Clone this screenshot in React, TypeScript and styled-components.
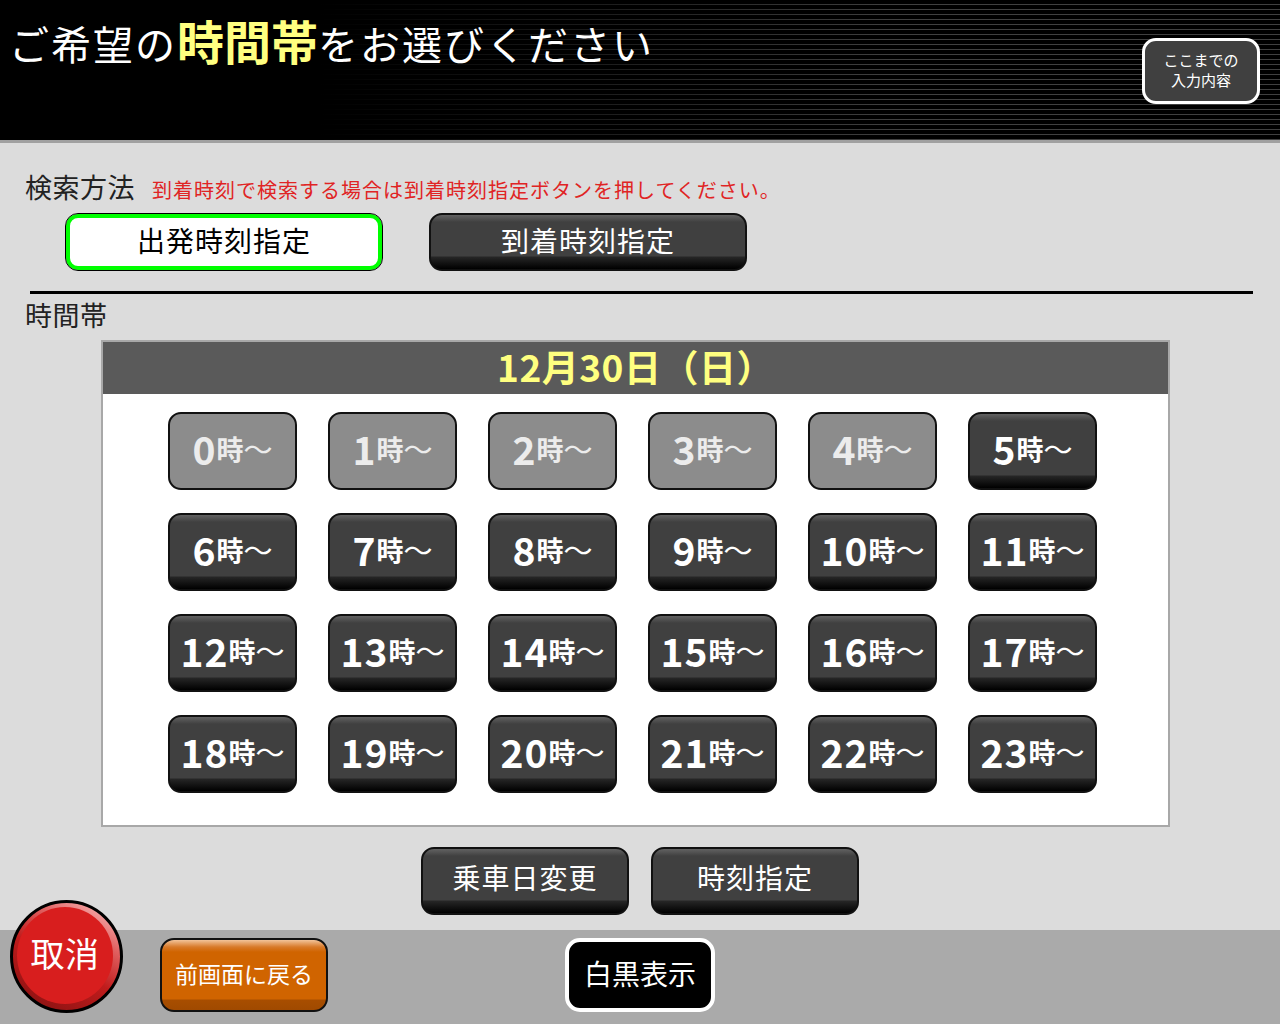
import React from "react";
import styled, { createGlobalStyle, css } from "styled-components";

const Global = createGlobalStyle`
  html, body { margin: 0; padding: 0; }
  body {
    background: #dcdcdc;
    font-family: "Noto Sans CJK JP", "Noto Sans", sans-serif;
  }
  * { box-sizing: border-box; }
`;

const Page = styled.div`
  width: 1280px;
  height: 1024px;
  display: flex;
  flex-direction: column;
  overflow: hidden;
`;

const Header = styled.header`
  height: 143px;
  flex: none;
  display: flex;
  justify-content: space-between;
  align-items: flex-start;
  border-bottom: 3px solid #a0a0a0;
  background:
    linear-gradient(to right, #000 0%, #000 25%, rgba(0,0,0,0.5) 50%, rgba(0,0,0,0) 70%),
    repeating-linear-gradient(to bottom, #000 0px, #000 4px, #404040 4px, #404040 5px);
`;

const Title = styled.h1`
  margin: 0;
  padding: 13px 0 0 9px;
  font-size: 40px;
  line-height: 54px;
  font-weight: 400;
  color: #fff;
  letter-spacing: 2px;
  white-space: nowrap;
`;

const TitleStrong = styled.span`
  font-size: 47px;
  font-weight: 700;
  color: #ffff80;
  letter-spacing: 0;
`;

const SummaryButton = styled.button`
  margin: 38px 20px 0 0;
  width: 118px;
  height: 66px;
  border: 3px solid #fff;
  border-radius: 14px;
  background: #404040;
  color: #fff;
  font-family: inherit;
  padding: 0 0 2px;
  display: flex;
  flex-direction: column;
  align-items: center;
  justify-content: center;
`;

const SummaryLine = styled.span`
  display: block;
  font-size: 15px;
  line-height: 20px;
  height: 20px;
`;

const Main = styled.main`
  flex: 1;
  display: flex;
  flex-direction: column;
  padding: 0 0 0 25px;
`;

const SearchRow = styled.div`
  margin-top: 29px;
  display: flex;
  align-items: baseline;
  gap: 17px;
  height: 30px;
`;

const Label = styled.div`
  font-size: 27px;
  line-height: 30px;
  color: #222;
  letter-spacing: 0.5px;
`;

const Hint = styled.span`
  font-size: 20px;
  line-height: 30px;
  color: #e02424;
  letter-spacing: 1px;
`;

const ModeRow = styled.div`
  margin: 11px 0 0 40px;
  display: flex;
  gap: 46px;
`;

const darkGloss = css`
  background:
    linear-gradient(to bottom,
      #626262 0px, #4a4a4a 5px, #404040 7px,
      #404040 calc(100% - 13px), #262626 calc(100% - 12px), #000 100%);
  color: #fff;
`;

const ModeButton = styled.button<{ $active?: boolean }>`
  width: 318px;
  height: 58px;
  border-radius: 13px;
  font-family: inherit;
  font-size: 28px;
  letter-spacing: 1px;
  padding: 0 0 5px;
  display: flex;
  align-items: center;
  justify-content: center;
  ${(p) =>
    p.$active
      ? css`
          background: #fff;
          color: #000;
          border: 1px solid #000;
          box-shadow: inset 0 0 0 4px #00ff00;
        `
      : css`
          ${darkGloss};
          border: 2px solid #111;
        `}
`;

const Divider = styled.hr`
  margin: 20px 0 0 5px;
  width: 1223px;
  height: 3px;
  border: none;
  background: #000;
`;

const SectionLabel = styled(Label)`
  margin-top: 6px;
`;

const Panel = styled.section`
  margin: 10px 0 0 76px;
  width: 1069px;
  height: 487px;
  border: 2px solid #a8a8a8;
  background: #fff;
  display: flex;
  flex-direction: column;
`;

const PanelHead = styled.div`
  height: 52px;
  background: #5a5a5a;
  color: #ffff80;
  font-size: 37px;
  font-weight: 700;
  padding-bottom: 4px;
  display: flex;
  align-items: center;
  justify-content: center;
  letter-spacing: 0.5px;
`;

const HourGrid = styled.div`
  padding: 18px 0 0 65px;
  display: grid;
  grid-template-columns: repeat(6, 129px);
  grid-auto-rows: 78px;
  column-gap: 31px;
  row-gap: 23px;
`;

const HourButton = styled.button<{ $disabled?: boolean }>`
  border-radius: 13px;
  border: 2px solid #111;
  padding: 0 0 5px;
  font-family: inherit;
  display: flex;
  align-items: center;
  justify-content: center;
  white-space: nowrap;
  ${(p) =>
    p.$disabled
      ? css`
          background: #8c8c8c;
          color: #ececec;
        `
      : darkGloss}
`;

const HourNum = styled.span`
  font-size: 39px;
  font-weight: 700;
  line-height: 1;
  letter-spacing: 1px;
`;

const HourUnit = styled.span`
  font-size: 27px;
  font-weight: 700;
  line-height: 1;
`;

const Tilde = styled.span`
  font-size: 29px;
  font-weight: 400;
  line-height: 1;
`;

const ActionRow = styled.div`
  margin: 20px 0 0 -25px;
  display: flex;
  justify-content: center;
  gap: 22px;
`;

const ActionButton = styled.button`
  ${darkGloss};
  width: 208px;
  height: 68px;
  border-radius: 13px;
  border: 2px solid #111;
  font-family: inherit;
  font-size: 28px;
  letter-spacing: 1px;
  padding: 0 0 8px;
  display: flex;
  align-items: center;
  justify-content: center;
`;

const Footer = styled.footer`
  height: 94px;
  flex: none;
  background: #aaaaaa;
  display: grid;
  grid-template-columns: 1fr auto 1fr;
  align-items: start;
`;

const FooterLeft = styled.div`
  display: flex;
  align-items: flex-start;
  padding-left: 10px;
`;

const CancelRing = styled.button`
  margin-top: -30px;
  width: 113px;
  height: 113px;
  border-radius: 50%;
  border: 3px solid #000;
  padding: 4px 7px 6px 4px;
  background: linear-gradient(210deg, #ffc8c8 0%, #e06060 30%, #c01c1c 55%, #801010 100%);
  display: flex;
  font-family: inherit;
`;

const CancelFace = styled.span`
  flex: 1;
  border-radius: 50%;
  background: #d81e1e;
  color: #fff;
  font-size: 34px;
  display: flex;
  align-items: center;
  justify-content: center;
  padding-bottom: 6px;
  letter-spacing: 0.5px;
`;

const BackButton = styled.button`
  margin: 8px 0 0 37px;
  width: 168px;
  height: 74px;
  border-radius: 14px;
  border: 2px solid #111;
  background: linear-gradient(to bottom,
    #f2c49a 0px, #d87a2a 7px, #d06400 12px,
    #d06400 calc(100% - 11px), #a84e00 calc(100% - 10px), #a04a00 100%);
  color: #fff;
  font-family: inherit;
  font-size: 23px;
  padding: 0 0 4px;
  display: flex;
  align-items: center;
  justify-content: center;
`;

const MonoButton = styled.button`
  margin-top: 8px;
  width: 150px;
  height: 74px;
  border-radius: 15px;
  border: 4px solid #fff;
  background: #000;
  color: #fff;
  font-family: inherit;
  font-size: 28px;
  padding: 0 0 4px;
  display: flex;
  align-items: center;
  justify-content: center;
`;

const hours = Array.from({ length: 24 }, (_, i) => i);

export default function App() {
  return (
    <Page>
      <Global />
      <Header>
        <Title>
          ご希望の<TitleStrong>時間帯</TitleStrong>をお選びください
        </Title>
        <SummaryButton>
          <SummaryLine>ここまでの</SummaryLine>
          <SummaryLine>入力内容</SummaryLine>
        </SummaryButton>
      </Header>
      <Main>
        <SearchRow>
          <Label>検索方法</Label>
          <Hint>到着時刻で検索する場合は到着時刻指定ボタンを押してください。</Hint>
        </SearchRow>
        <ModeRow>
          <ModeButton $active>出発時刻指定</ModeButton>
          <ModeButton>到着時刻指定</ModeButton>
        </ModeRow>
        <Divider />
        <SectionLabel>時間帯</SectionLabel>
        <Panel>
          <PanelHead>12月30日（日）</PanelHead>
          <HourGrid>
            {hours.map((h) => (
              <HourButton key={h} $disabled={h < 5}>
                <HourNum>{h}</HourNum>
                <HourUnit>時</HourUnit>
                <Tilde>～</Tilde>
              </HourButton>
            ))}
          </HourGrid>
        </Panel>
        <ActionRow>
          <ActionButton>乗車日変更</ActionButton>
          <ActionButton>時刻指定</ActionButton>
        </ActionRow>
      </Main>
      <Footer>
        <FooterLeft>
          <CancelRing>
            <CancelFace>取消</CancelFace>
          </CancelRing>
          <BackButton>前画面に戻る</BackButton>
        </FooterLeft>
        <MonoButton>白黒表示</MonoButton>
        <div />
      </Footer>
    </Page>
  );
}
